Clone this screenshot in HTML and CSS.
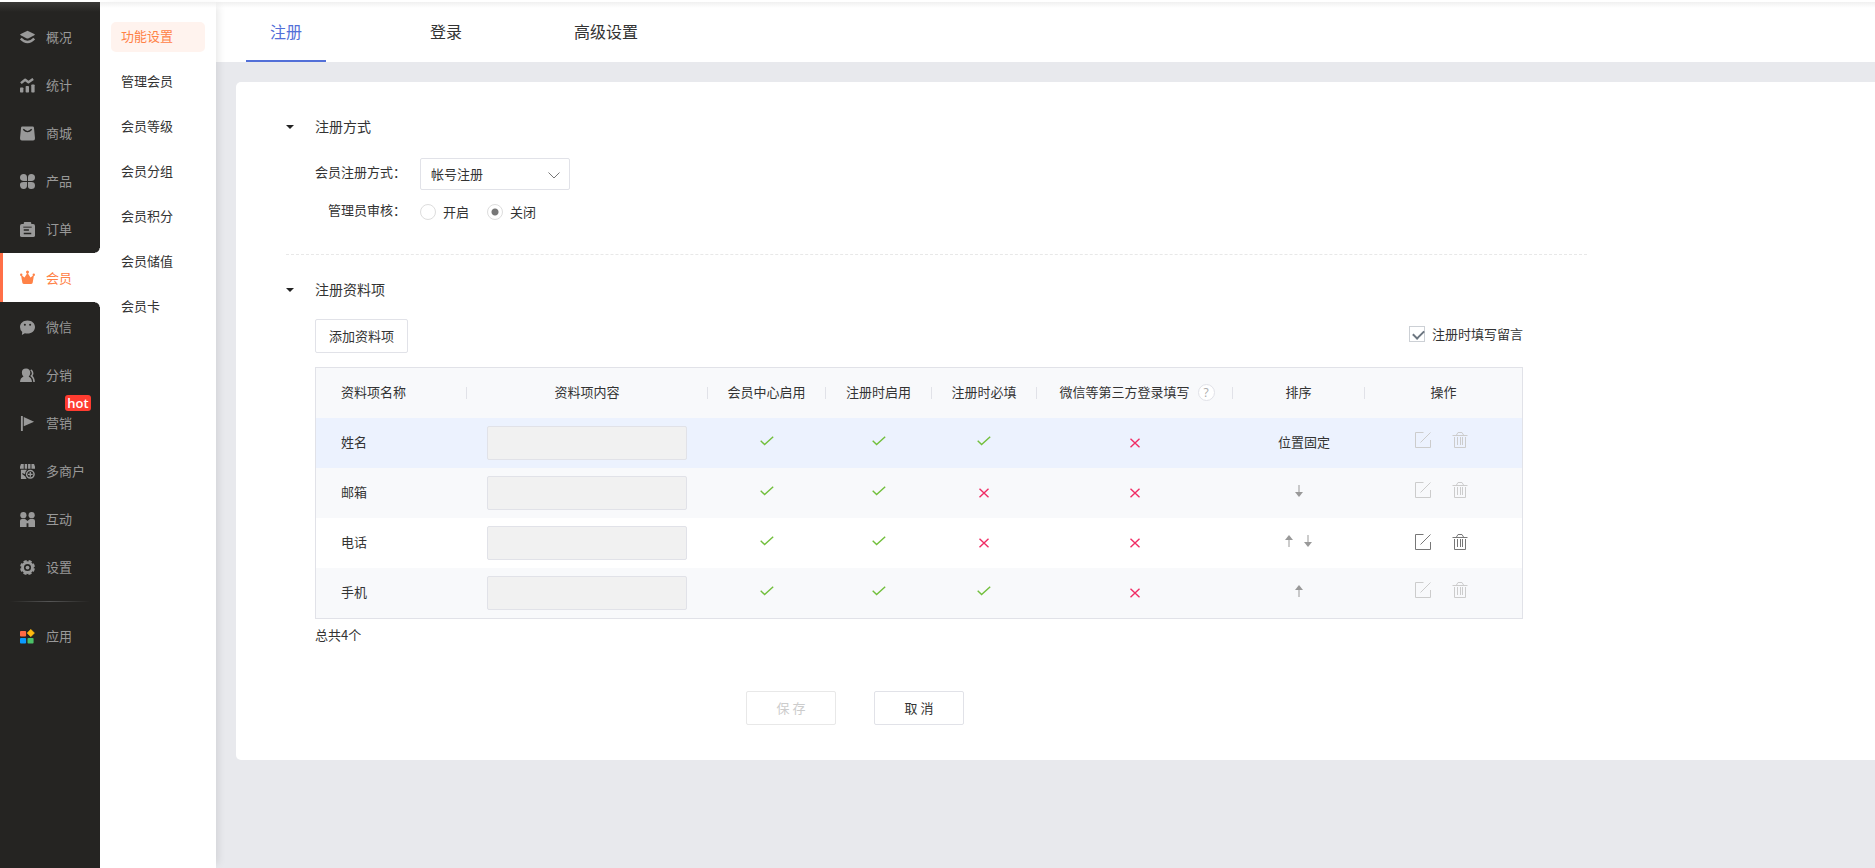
FILE: index.html
```html
<!DOCTYPE html>
<html lang="zh-CN">
<head>
<meta charset="utf-8">
<title>功能设置</title>
<link rel="stylesheet" href="styles.css">
</head>
<body>
<svg class="defs" width="0" height="0" aria-hidden="true">
  <symbol id="check" viewBox="0 0 14 10"><path d="M.7 4.8 4.6 8.6 13.2.7" fill="none" stroke="#72bf3c" stroke-width="1.4"/></symbol>
  <symbol id="cross" viewBox="0 0 10 10"><path d="M.5.7 9.5 9.3M9.5.7.5 9.3" fill="none" stroke="#f02d65" stroke-width="1.4"/></symbol>
  <symbol id="up" viewBox="0 0 8 12"><path d="M4 0 8 5H0z" fill="#999"/><path d="M4 4v8" stroke="#999"/></symbol>
  <symbol id="down" viewBox="0 0 8 12"><path d="M4 12 8 7H0z" fill="#999"/><path d="M4 8V0" stroke="#999"/></symbol>
  <symbol id="edit" viewBox="0 0 16 16"><path d="M8.5.5h-8v15h15V8M5.5 10.5 15.5.5" fill="none" stroke="currentColor"/></symbol>
  <symbol id="trash" viewBox="0 0 16 16"><path d="M.5 3.5h15M4.500 3 6 .5h4L11.500 3M2.500 5v10.500h11V5M5.500 5v8M8.500 5v8M10.500 5v8" fill="none" stroke="currentColor"/></symbol>
</svg>
<div class="app">
  <nav class="side" aria-label="主菜单">
    <a class="side-item" href="#"><svg class="ico" viewBox="0 0 16 16"><path d="M8 .800 15.200 4.300Q16.400 5 15.200 5.700L9.200 8.800Q8 9.300 6.800 8.800L.8 5.700Q-.4 5 .8 4.300z"/><path d="M.8 9.200Q4 12.800 8 12.800T15.200 9.200" fill="none" stroke="currentColor" stroke-width="2.600"/></svg>概况</a>
    <a class="side-item" href="#"><svg class="ico" viewBox="0 0 16 16"><path d="M1 5.500 5.500 1.800 9 4.500 14 1" fill="none" stroke="currentColor" stroke-width="2.600" stroke-linejoin="round"/><rect y="10" width="3.600" height="5.500" rx=".8"/><rect x="6" y="8.500" width="3.600" height="7" rx=".8"/><rect x="12" y="7" width="3.600" height="8.500" rx=".8"/></svg>统计</a>
    <a class="side-item" href="#"><svg class="ico" viewBox="0 0 16 16"><path d="M2.500.5h11q1.300 0 1.400 1.300L16 13q0 2.500-2 2.500H2q-2 0-2-2.500L1.100 1.800Q1.200.5 2.500.5z"/><path d="M3.500 3.500q4.500 5 9 0" fill="none" stroke="#252422" stroke-width="1.500"/></svg>商城</a>
    <a class="side-item" href="#"><svg class="ico" viewBox="0 0 16 16"><path d="M4 0q3.500 0 3.500 4v3.500H4Q0 7.500 0 3.800T4 0zM12 0q4 0 4 3.800T12 7.500H8.500V4Q8.500 0 12 0zM4 8.500h3.500V12q0 4-3.500 4T0 12.200 4 8.500zM8.500 8.500H12q4 0 4 3.700T12 16t-3.500-4z"/></svg>产品</a>
    <a class="side-item" href="#"><svg class="ico" viewBox="0 0 16 16"><rect y="2" width="16" height="14" rx="2"/><rect x="4" width="8" height="4" rx="1"/><path d="M3.500 5.500h9" stroke="#252422"/><path d="M4 8.500h5.500M4 12.200h8" stroke="#252422" stroke-width="1.500"/></svg>订单</a>
    <a class="side-item side-item-active" href="#" aria-current="page"><svg class="ico" viewBox="0 0 16 16"><circle cx="8" cy="2" r="1.600"/><circle cx="1.300" cy="5" r="1.300"/><circle cx="14.700" cy="5" r="1.300"/><path d="M1 5l3.800 3L8 3l3.200 5L15 5l-1.500 8.500q-.3 1.500-2 1.500h-7q-1.700 0-2-1.500z"/></svg>会员</a>
    <a class="side-item" href="#"><svg class="ico" viewBox="0 0 16 16"><path d="M8 .5c4.700 0 8 3 8 7s-3.300 7-8 7q-1.500 0-2.800-.4L2 16l.4-3.200Q0 10.800 0 7.500c0-4 3.300-7 8-7z"/><circle cx="5.200" cy="5" r="1.100" fill="#252422"/><circle cx="10.800" cy="5" r="1.100" fill="#252422"/></svg>微信</a>
    <a class="side-item" href="#"><svg class="ico" viewBox="0 0 16 16"><path d="M6.500.5c2.800 0 4.500 2 4.500 4.500 0 2-1 3.300-1.800 4Q12.500 10.500 12.800 15H0q.2-4.500 3.700-6Q2 7.500 2 5 2 .5 6.500.5z"/><path d="M11.500 2q2 1.300 2 3.500t-1.300 3Q14.800 10.500 15 15" fill="none" stroke="currentColor" stroke-width="1.700"/></svg>分销</a>
    <a class="side-item" href="#"><svg class="ico" viewBox="0 0 16 16"><path d="M1 0h2v16H1zM4 1l11 5L4 11z"/></svg>营销<span class="hot">hot</span></a>
    <a class="side-item" href="#"><svg class="ico" viewBox="0 0 16 16"><path d="M1 0h3v5H0V3zM5 0h2.600v5H5zM8.600 0h2.600v5H8.600zM12.200 0H15l1 3v2h-3.800zM1 6h6.500l-1.500 2-.7 3L2.500 9.500V11l3 2L7 16H1z"/><circle cx="11" cy="11" r="4" fill="none" stroke="currentColor" stroke-width="1.600"/><path d="M11 8.500v5M8.500 11h5" stroke="currentColor" stroke-width="1.400"/></svg>多商户</a>
    <a class="side-item" href="#"><svg class="ico" viewBox="0 0 16 16"><circle cx="3.600" cy="3.400" r="3.300"/><circle cx="12.400" cy="3.400" r="3.300"/><path d="M0 16v-6.500Q0 7.500 2 7.500h3.500L8 9.500l2.500-2H14q2 0 2 2V16H9v-4H7v4z"/></svg>互动</a>
    <a class="side-item" href="#"><svg class="ico" viewBox="0 0 16 16"><circle cx="8" cy="8" r="5.300" fill="none" stroke="currentColor" stroke-width="3"/><circle cx="8" cy="8" r="7" fill="none" stroke="currentColor" stroke-width="2" stroke-dasharray="3.400 2.100" stroke-dashoffset="-1"/><circle cx="8" cy="8" r="2"/></svg>设置</a>
    <hr class="side-line">
    <a class="side-item" href="#"><svg class="ico" viewBox="0 0 16 16"><rect y="2" width="6.500" height="6" rx="1" fill="#ff6a45"/><path d="m11.500.300 4 4-4 4-4-4z" fill="#ffb90f" stroke="#ffb90f" stroke-width=".5" stroke-linejoin="round"/><rect y="9.500" width="6.500" height="6" rx="1" fill="#0a9bff"/><rect x="8" y="9.500" width="6.500" height="6" rx="1" fill="#4bc168"/></svg>应用</a>
  </nav>
  <nav class="sub" aria-label="会员菜单">
    <a class="sub-item sub-item-active" href="#" aria-current="page">功能设置</a>
    <a class="sub-item" href="#">管理会员</a>
    <a class="sub-item" href="#">会员等级</a>
    <a class="sub-item" href="#">会员分组</a>
    <a class="sub-item" href="#">会员积分</a>
    <a class="sub-item" href="#">会员储值</a>
    <a class="sub-item" href="#">会员卡</a>
  </nav>
  <div class="main">
    <nav class="tabs" aria-label="设置">
      <a class="tab tab-active" href="#">注册</a>
      <a class="tab" href="#">登录</a>
      <a class="tab" href="#">高级设置</a>
    </nav>
    <main class="card">
      <section class="section section-mode">
        <h2 class="title">注册方式</h2>
        <div class="row">
          <label class="label" for="mode">会员注册方式：</label>
          <span class="select-box">
            <select class="select" id="mode"><option>帐号注册</option></select>
            <svg class="chevron" width="12" height="7" viewBox="0 0 12 7"><path d="M.5.5 6 6 11.500.5" fill="none" stroke="#777"/></svg>
          </span>
        </div>
        <div class="row row-audit" role="radiogroup" aria-labelledby="audit">
          <span class="label" id="audit">管理员审核：</span>
          <label class="radio-label"><input class="radio" type="radio" name="audit">开启</label>
          <label class="radio-label"><input class="radio" type="radio" name="audit" checked>关闭</label>
        </div>
      </section>
      <section class="section">
        <h2 class="title">注册资料项</h2>
        <div class="fields">
          <div class="toolbar">
            <button class="btn btn-add" type="button">添加资料项</button>
            <label class="check-label"><input class="checkbox" type="checkbox" checked>注册时填写留言</label>
          </div>
          <table class="table">
            <colgroup><col class="c1"><col class="c2"><col class="c3"><col class="c4"><col class="c5"><col class="c6"><col class="c7"><col class="c8"></colgroup>
            <thead>
              <tr><th><div class="th th-name">资料项名称</div></th><th><div class="th">资料项内容</div></th><th><div class="th">会员中心启用</div></th><th><div class="th">注册时启用</div></th><th><div class="th">注册时必填</div></th><th><div class="th th-third">微信等第三方登录填写<button class="help" type="button" aria-label="说明">?</button></div></th><th><div class="th">排序</div></th><th><div class="th">操作</div></th></tr>
            </thead>
            <tbody>
              <tr class="hovered">
                <td class="name">姓名</td>
                <td><input class="value" type="text" aria-label="姓名" disabled></td>
                <td><svg class="yes"><use href="#check"/></svg></td>
                <td><svg class="yes"><use href="#check"/></svg></td>
                <td><svg class="yes"><use href="#check"/></svg></td>
                <td><svg class="no"><use href="#cross"/></svg></td>
                <td class="fixed">位置固定</td>
                <td><div class="acts"><button class="act" type="button" aria-label="编辑" disabled><svg class="act-ico"><use href="#edit"/></svg></button><button class="act" type="button" aria-label="删除" disabled><svg class="act-ico"><use href="#trash"/></svg></button></div></td>
              </tr>
              <tr>
                <td class="name">邮箱</td>
                <td><input class="value" type="text" aria-label="邮箱" disabled></td>
                <td><svg class="yes"><use href="#check"/></svg></td>
                <td><svg class="yes"><use href="#check"/></svg></td>
                <td><svg class="no"><use href="#cross"/></svg></td>
                <td><svg class="no"><use href="#cross"/></svg></td>
                <td><div class="sort"><button class="act" type="button" aria-label="下移"><svg class="arrow"><use href="#down"/></svg></button></div></td>
                <td><div class="acts"><button class="act" type="button" aria-label="编辑" disabled><svg class="act-ico"><use href="#edit"/></svg></button><button class="act" type="button" aria-label="删除" disabled><svg class="act-ico"><use href="#trash"/></svg></button></div></td>
              </tr>
              <tr>
                <td class="name">电话</td>
                <td><input class="value" type="text" aria-label="电话" disabled></td>
                <td><svg class="yes"><use href="#check"/></svg></td>
                <td><svg class="yes"><use href="#check"/></svg></td>
                <td><svg class="no"><use href="#cross"/></svg></td>
                <td><svg class="no"><use href="#cross"/></svg></td>
                <td><div class="sort"><button class="act" type="button" aria-label="上移"><svg class="arrow"><use href="#up"/></svg></button><button class="act" type="button" aria-label="下移"><svg class="arrow"><use href="#down"/></svg></button></div></td>
                <td><div class="acts acts-on"><button class="act" type="button" aria-label="编辑"><svg class="act-ico"><use href="#edit"/></svg></button><button class="act" type="button" aria-label="删除"><svg class="act-ico"><use href="#trash"/></svg></button></div></td>
              </tr>
              <tr>
                <td class="name">手机</td>
                <td><input class="value" type="text" aria-label="手机" disabled></td>
                <td><svg class="yes"><use href="#check"/></svg></td>
                <td><svg class="yes"><use href="#check"/></svg></td>
                <td><svg class="yes"><use href="#check"/></svg></td>
                <td><svg class="no"><use href="#cross"/></svg></td>
                <td><div class="sort"><button class="act" type="button" aria-label="上移"><svg class="arrow"><use href="#up"/></svg></button></div></td>
                <td><div class="acts"><button class="act" type="button" aria-label="编辑" disabled><svg class="act-ico"><use href="#edit"/></svg></button><button class="act" type="button" aria-label="删除" disabled><svg class="act-ico"><use href="#trash"/></svg></button></div></td>
              </tr>
            </tbody>
          </table>
          <p class="total">总共4个</p>
        </div>
      </section>
      <div class="footer">
        <button class="btn btn-save" type="button" disabled>保 存</button>
        <button class="btn" type="button">取 消</button>
      </div>
    </main>
  </div>
</div>
</body>
</html>
```
FILE: styles.css
```css
* { box-sizing: border-box; }
body {
  margin: 0;
  background: #fff;
  color: #333;
  font: 400 13px/20px "Noto Sans CJK SC", sans-serif;
}
button, input, select { font: inherit; color: inherit; }
a { color: inherit; text-decoration: none; }
svg { display: block; }
.defs { position: absolute; }

.app {
  display: flex;
  min-height: 100vh;
  border-top: 2px solid #fff;
  background: #e8e9ed;
}

.side {
  flex: none;
  width: 100px;
  padding-top: 11px;
  background: linear-gradient(#3b3a38, #252422 10px);
  color: #999;
}
.side-item {
  position: relative;
  display: flex;
  align-items: center;
  gap: 11px;
  height: 48px;
  padding-left: 20px;
}
.ico { width: 15px; height: 15px; fill: currentColor; flex: none; }
.side-item-active {
  height: 49px;
  margin-bottom: 1px;
  padding-left: 17px;
  border-left: 3px solid #ff6f47;
  background: #fff;
  color: #ff8247;
}
.side-item-active::before, .side-item-active::after {
  content: "";
  position: absolute;
  right: 0;
  width: 5px;
  height: 5px;
  background: radial-gradient(circle at 0 0, #252422 4px, #fff 5px);
}
.side-item-active::before { top: -5px; }
.side-item-active::after {
  bottom: -5px;
  background: radial-gradient(circle at 0 100%, #252422 4px, #fff 5px);
}
.hot {
  position: absolute;
  left: 65px;
  top: -4px;
  width: 26px;
  border-radius: 3px;
  background: #ff3c30;
  color: #fff;
  font: 600 13px/16px "Open Sans", sans-serif;
  text-align: center;
}
.side-line {
  height: 1px;
  margin: 10px;
  border: 0;
  background: linear-gradient(90deg, transparent, #555, transparent);
}

.sub {
  position: relative;
  flex: none;
  display: flex;
  flex-direction: column;
  gap: 15px;
  width: 116px;
  padding: 20px 11px;
  background: linear-gradient(#f0f0f0, #fff 6px);
  box-shadow: 6px 0 8px -4px rgba(0, 0, 0, .1);
}
.sub-item {
  height: 30px;
  padding-left: 10px;
  border-radius: 5px;
  line-height: 28px;
}
.sub-item-active { background: #fff3ee; color: #ff8247; }

.main { flex: 1; min-width: 0; }
.tabs {
  display: flex;
  gap: 80px;
  height: 60px;
  padding-left: 30px;
  background: linear-gradient(#f0f0f0, #fff 6px);
  font-size: 16px;
}
.tab {
  width: 80px;
  border-bottom: 2px solid transparent;
  line-height: 59px;
  text-align: center;
  white-space: nowrap;
}
.tab-active { border-color: #5370d8; color: #5370d8; }

.card {
  margin: 20px 0 0 20px;
  padding: 34px 50px 35px;
  border-radius: 5px 0 0 5px;
  background: #fff;
}
.section { max-width: 1301px; }
.section-mode {
  margin-bottom: 24px;
  padding-bottom: 30px;
  border-bottom: 1px dashed #e8e8e8;
}
.title {
  display: flex;
  align-items: center;
  gap: 21px;
  margin: 0;
  font-size: 14px;
  font-weight: 400;
  line-height: 20px;
}
.title::before {
  content: "";
  margin-top: 2px;
  border: 4px solid transparent;
  border-top-color: #222;
  border-bottom: 0;
}
.row {
  display: flex;
  align-items: center;
  margin-top: 22px;
}
.row-audit { margin-top: 10px; }
.label { width: 134px; padding: 0 14px 4px 0; text-align: right; }
.select-box { position: relative; }
.select {
  display: block;
  appearance: none;
  width: 150px;
  height: 32px;
  padding: 0 30px 0 10px;
  border: 1px solid #e1e2e8;
  border-radius: 2px;
  background: #fff;
}
.chevron { position: absolute; right: 10px; top: 14px; pointer-events: none; }
.radio-label { display: flex; align-items: center; gap: 7px; margin-right: 18px; }
.radio {
  appearance: none;
  width: 16px;
  height: 16px;
  margin: 0;
  border: 1px solid #ddd;
  border-radius: 50%;
  background: #fff;
}
.radio:checked { background: radial-gradient(circle, #777 3px, #fff 4px); }

.fields { max-width: 1237px; padding-left: 29px; }
.toolbar {
  display: flex;
  justify-content: space-between;
  align-items: center;
  margin: 20px 0 14px;
}
.btn {
  width: 90px;
  height: 34px;
  padding: 0;
  border: 1px solid #e1e2e8;
  border-radius: 2px;
  background: #fff;
}
.btn-add { width: 93px; }
.btn-save { border-color: #e8e8e8; color: #ccc; }
.check-label { display: flex; align-items: center; gap: 7px; padding-bottom: 4px; }
.checkbox {
  appearance: none;
  width: 16px;
  height: 16px;
  margin: 0;
  border: 1px solid #ccd0d5;
  background: #fff;
}
.checkbox:checked::before {
  content: "";
  display: block;
  width: 9px;
  height: 5px;
  margin: 3px 0 0 3px;
  border: solid #6c7680;
  border-width: 0 0 2px 2px;
  transform: rotate(-45deg);
}

.table {
  width: 100%;
  table-layout: fixed;
  border: 1px solid #e1e2e8;
  border-collapse: separate;
  border-spacing: 0;
}
.c1 { width: 151px; }
.c2 { width: 241px; }
.c3 { width: 118px; }
.c4 { width: 106px; }
.c5 { width: 105px; }
.c6 { width: 196px; }
.c7 { width: 132px; }
.table th, .table td { height: 50px; padding: 0; text-align: center; }
.table td { padding-right: 1px; }
.table th { background: #f8f9fb; font-weight: 400; }
.th {
  display: flex;
  align-items: center;
  justify-content: center;
  gap: 8px;
  height: 12px;
  padding-bottom: 2px;
  border-right: 1px solid #e1e2e8;
  white-space: nowrap;
}
.table th:last-child .th { border: 0; }
.th-name { justify-content: flex-start; padding-left: 25px; }
.th-third { padding-left: 5px; }
.help {
  width: 17px;
  height: 17px;
  padding: 0;
  border: 1px solid #e1e2e8;
  border-radius: 50%;
  background: #fff;
  color: #aaa;
  font: 12px/15px "Open Sans", sans-serif;
}
.table tbody tr:nth-child(even) { background: #f8f9fb; }
.table .hovered { background: #ecf2fe; }
.table .name { padding: 0 0 2px 25px; text-align: left; }
.table .fixed { padding: 0 0 2px 10px; }
.value {
  display: block;
  width: 200px;
  max-width: 90%;
  height: 34px;
  margin: 0 auto;
  border: 1px solid #e1e2e8;
  border-radius: 2px;
  background: #f1f1f1;
}
.yes { width: 14px; height: 10px; margin: 0 auto 4px; }
.no { width: 10px; height: 10px; margin: 0 auto; }
.act {
  display: block;
  padding: 0;
  border: 0;
  background: none;
  color: #777;
}
.act:disabled { color: #ccc; }
.act-ico { width: 16px; height: 16px; }
.arrow { width: 8px; height: 12px; }
.sort { display: flex; justify-content: center; gap: 11px; padding-bottom: 4px; }
.acts { display: flex; justify-content: center; gap: 21px; padding: 0 4px 6px 0; }
.acts-on { padding-bottom: 2px; }
.total { margin: 6px 0 0; }
.footer { display: flex; gap: 38px; margin-top: 46px; padding-left: 460px; }
```
